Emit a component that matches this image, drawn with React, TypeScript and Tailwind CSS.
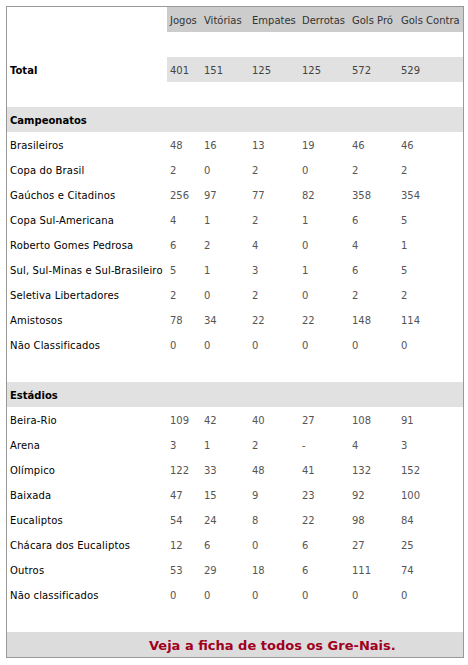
import React from "react";

const cols = "grid grid-cols-[160px_34px_48px_50px_50px_49px_1fr] h-[25px] items-center pt-[2px]";

const camp: [string, (string | number)[]][] = [
  ["Brasileiros", [48, 16, 13, 19, 46, 46]],
  ["Copa do Brasil", [2, 0, 2, 0, 2, 2]],
  ["Gaúchos e Citadinos", [256, 97, 77, 82, 358, 354]],
  ["Copa Sul-Americana", [4, 1, 2, 1, 6, 5]],
  ["Roberto Gomes Pedrosa", [6, 2, 4, 0, 4, 1]],
  ["Sul, Sul-Minas e Sul-Brasileiro", [5, 1, 3, 1, 6, 5]],
  ["Seletiva Libertadores", [2, 0, 2, 0, 2, 2]],
  ["Amistosos", [78, 34, 22, 22, 148, 114]],
  ["Não Classificados", [0, 0, 0, 0, 0, 0]],
];

const est: [string, (string | number)[]][] = [
  ["Beira-Rio", [109, 42, 40, 27, 108, 91]],
  ["Arena", [3, 1, 2, "-", 4, 3]],
  ["Olímpico", [122, 33, 48, 41, 132, 152]],
  ["Baixada", [47, 15, 9, 23, 92, 100]],
  ["Eucaliptos", [54, 24, 8, 22, 98, 84]],
  ["Chácara dos Eucaliptos", [12, 6, 0, 6, 27, 25]],
  ["Outros", [53, 29, 18, 6, 111, 74]],
  ["Não classificados", [0, 0, 0, 0, 0, 0]],
];

const heads = ["Jogos", "Vitórias", "Empates", "Derrotas", "Gols Pró", "Gols Contra"];

function Row({ label, vals }: { label: string; vals: (string | number)[] }) {
  return (
    <div className={cols}>
      <div className="pl-[3px] text-black whitespace-nowrap tracking-[0.15px]">{label}</div>
      {vals.map((v, i) => (
        <div key={i} className="pl-[3px] text-[#555]">
          {v}
        </div>
      ))}
    </div>
  );
}

function Blank() {
  return <div className="h-[25px]" />;
}

export default function App() {
  return (
    <div className="bg-white w-[468px] h-[665px] pt-[6px] pl-[6px]" style={{ fontFamily: '"DejaVu Sans", Verdana, sans-serif' }}>
      <div className="w-[458px] border border-[#999] text-[10px] leading-none">
        <div className="grid grid-cols-[160px_34px_48px_50px_50px_49px_1fr] h-[25px]">
          <div className="h-full" />
          {heads.map((h) => (
            <div key={h} className="h-full bg-[#cccccc] pl-[3px] pt-[2px] flex items-center text-[#333] whitespace-nowrap">
              {h}
            </div>
          ))}
        </div>
        <Blank />
        <div className="grid grid-cols-[160px_34px_48px_50px_50px_49px_1fr] h-[25px] items-center">
          <div className="pl-[3px] pt-[2px] font-bold text-black">Total</div>
          {[401, 151, 125, 125, 572, 529].map((v, i) => (
            <div key={i} className="h-full bg-[#e1e1e1] pl-[3px] pt-[2px] flex items-center text-[#444]">
              {v}
            </div>
          ))}
        </div>
        <Blank />
        <div className="h-[25px] bg-[#e1e1e1] pl-[3px] pt-[2px] flex items-center font-bold text-black">Campeonatos</div>
        {camp.map(([l, v]) => (
          <Row key={l} label={l} vals={v} />
        ))}
        <Blank />
        <div className="h-[25px] bg-[#e1e1e1] pl-[3px] pt-[2px] flex items-center font-bold text-black">Estádios</div>
        {est.map(([l, v]) => (
          <Row key={l} label={l} vals={v} />
        ))}
        <Blank />
        <div className="h-[25px] bg-[#dcdcdc] flex items-center pl-[142px] pt-[1px] text-[13px] font-bold text-[#a0001e] whitespace-nowrap">
          Veja a ficha de todos os Gre-Nais.
        </div>
      </div>
    </div>
  );
}
